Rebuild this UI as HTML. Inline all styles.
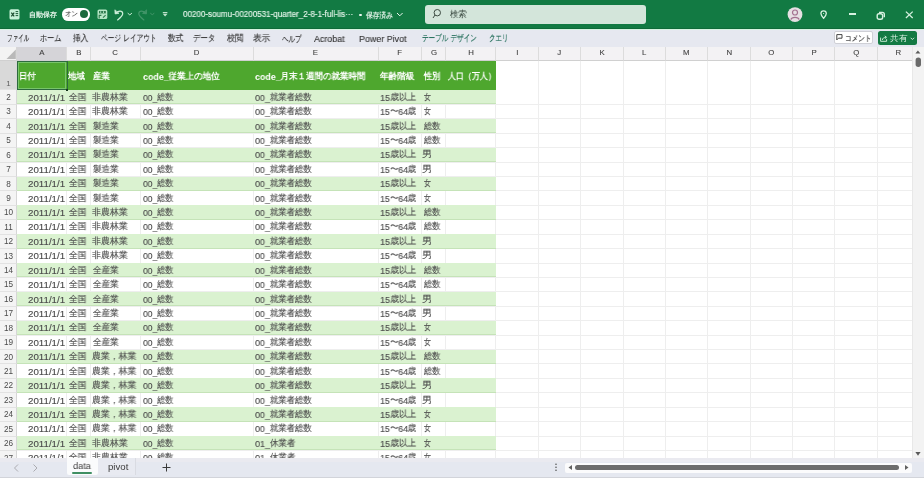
<!DOCTYPE html><html><head><meta charset="utf-8"><style>
*{margin:0;padding:0;box-sizing:border-box}
html,body{width:924px;height:478px;overflow:hidden;background:#fff;font-family:"Liberation Sans",sans-serif;color:#262626}
.a{position:absolute;white-space:nowrap}
.g{will-change:transform}
svg.a{overflow:visible}
.t{position:absolute;white-space:nowrap;transform-origin:0 0;line-height:normal;will-change:transform}
.ch{position:absolute;top:47.2px;height:13.8px;border-right:1px solid #dcdcdc;border-bottom:1px solid #d0d0d0}
.rh{position:absolute;left:0;width:17px;background:#f4f4f4;border-bottom:1px solid #e2e2e2;border-right:1px solid #d6d6d6}
.j{font-size:var(--j,1em);position:relative;top:var(--jt,0)}</style></head><body>
<div class="a" style="left:0;top:0;width:924px;height:28.8px;background:#127a43"></div>
<div class="a" style="left:0;top:27.6px;width:924px;height:1.2px;background:#0f6a39"></div>
<div class="a" style="left:0;top:28.8px;width:924px;height:1.6px;background:#d6f4e2"></div>
<svg class="a" style="left:9px;top:9px" width="11" height="11" viewBox="0 0 11 11"><rect x="0.5" y="0.3" width="10" height="10.2" rx="1.6" fill="#c9f1d9"/><path d="M2.3 3.6 L5.2 7.4 M5.2 3.6 L2.3 7.4" stroke="#1d4d30" stroke-width="1.2"/><path d="M6.6 2.6 H9.2 M6.6 4.6 H9.2 M6.6 6.6 H9.2" stroke="#1d5c38" stroke-width="1"/></svg>
<div class="t" style="left:28.80px;top:10.15px;transform:scaleX(1.000);font-size:7.4px;font-weight:bold;color:#e3f3e8">自動保存</div>
<div class="a" style="left:62.2px;top:8.1px;width:27.6px;height:12.5px;border-radius:6.3px;background:#fff"></div>
<div class="t" style="left:65.08px;top:9.40px;transform:scaleX(0.917);font-size:7px;color:#2a2a2a">オン</div>
<div class="a" style="left:80px;top:10.2px;width:8.3px;height:8.3px;border-radius:50%;background:#1b6a3d"></div>
<svg class="a" style="left:97px;top:9px" width="11" height="11" viewBox="0 0 11 11"><rect x="0.5" y="0.5" width="9.8" height="9.6" rx="1.6" fill="#b6e6c6"/><rect x="2" y="2" width="6.8" height="2.4" fill="#2d7a4c"/><rect x="3.2" y="2.4" width="1" height="1.4" fill="#c8f0d6"/><rect x="6" y="2.4" width="1" height="1.4" fill="#c8f0d6"/><path d="M2.2 9.6 V6.4 H4.4 M6 8.6 L8.6 6.2" stroke="#2d7a4c" stroke-width="1.1" fill="none"/></svg>
<svg class="a" style="left:113px;top:8px" width="20" height="13" viewBox="0 0 20 13" fill="none" stroke="#cdeed9" stroke-width="1.25" stroke-linecap="round" stroke-linejoin="round"><polygon points="1.9,2.2 2.1,5.9 5.6,5.4" fill="#cdeed9" stroke-width="0.8"/><path d="M3.2 4.8 C5 2.6 9.6 2.1 9.7 5.5 C9.8 7.6 7.2 9.9 4.6 11.9"/><path d="M15 5.4 L16.8 6.9 L18.6 5.4" stroke-width="1"/></svg>
<svg class="a" style="left:137px;top:8px" width="20" height="13" viewBox="0 0 20 13" fill="none" stroke="#429569" stroke-width="1.25" stroke-linecap="round" stroke-linejoin="round"><polygon points="9.6,2.2 9.4,5.9 5.9,5.4" fill="#429569" stroke-width="0.8"/><path d="M8.3 4.8 C6.5 2.6 1.9 2.1 1.8 5.5 C1.7 7.6 4.3 9.9 6.9 11.9"/><path d="M13.6 5.4 L15.3 6.7 L17 5.4" stroke-width="1"/></svg>
<svg class="a" style="left:162px;top:11px" width="7" height="8" viewBox="0 0 7 8" fill="#bfe3cc"><rect x="0.8" y="1" width="4.6" height="1.1"/><polygon points="0.7,2.8 5.5,2.8 3.1,5.6"/></svg>
<div class="t" style="left:182.80px;top:9.30px;transform:scaleX(0.960);font-size:8.4px;-webkit-text-stroke:0.15px currentColor;color:#e6f5eb">00200-soumu-00200531-quarter_2-8-1-full-lis···</div>
<div class="a" style="left:359.4px;top:13.5px;width:2.6px;height:2.6px;border-radius:50%;background:#eef7f1"></div>
<div class="t" style="left:366.00px;top:10.65px;transform:scaleX(0.838);font-size:7.6px;font-weight:bold;color:#e6f5eb">保存済み</div>
<svg class="a" style="left:396px;top:12px" width="8" height="6" viewBox="0 0 8 6" fill="none" stroke="#eef7f1" stroke-width="1"><path d="M1 1 L3.8 3.8 L6.6 1"/></svg>
<div class="a" style="left:424.6px;top:4.9px;width:221px;height:18.9px;border-radius:3px;background:#d3e5da"></div>
<svg class="a" style="left:431px;top:8px" width="12" height="12" viewBox="0 0 12 12" fill="none" stroke="#3c4a41" stroke-width="1"><circle cx="6.3" cy="4.7" r="3.2"/><path d="M4 7 L2 10"/></svg>
<div class="t" style="left:449.50px;top:9.00px;transform:scaleX(0.922);font-size:8.6px;color:#3b4a41">検索</div>
<svg class="a" style="left:787px;top:7px" width="16" height="16" viewBox="0 0 16 16"><circle cx="8" cy="7.6" r="7.4" fill="#e6e0e3"/><circle cx="8" cy="5.5" r="2.5" fill="none" stroke="#a3708f" stroke-width="1.2"/><path d="M3.9 12.6 C4.6 9.6 11.4 9.6 12.1 12.6" fill="none" stroke="#a3708f" stroke-width="1.2"/></svg>
<svg class="a" style="left:819.5px;top:10px" width="8" height="9" viewBox="0 0 8 9" fill="none" stroke="#d6f1e0" stroke-width="1.3"><path d="M3.6 8.3 C1.9 6.3 0.9 5 0.9 3.5 A2.7 2.7 0 0 1 6.3 3.5 C6.3 5 5.3 6.3 3.6 8.3 Z"/><circle cx="3.6" cy="3.5" r="0.6" fill="#d6f1e0" stroke="none"/></svg>
<div class="a" style="left:848.5px;top:13.4px;width:7px;height:1.6px;background:#d6f1e0"></div>
<svg class="a" style="left:876px;top:10.5px" width="10" height="9" viewBox="0 0 10 9" fill="none" stroke="#d6f1e0" stroke-width="1.4"><rect x="1.2" y="2.8" width="5.4" height="5.4" rx="1.8"/><path d="M3 1.4 H6.4 A1.9 1.9 0 0 1 8.3 3.3 V6.3"/></svg>
<svg class="a" style="left:905px;top:11.4px" width="9" height="8" viewBox="0 0 9 8" fill="none" stroke="#d6f1e0" stroke-width="1.3"><path d="M0.9 0.6 L7.7 7 M7.7 0.6 L0.9 7"/></svg>
<div class="a" style="left:0;top:30.4px;width:924px;height:16.8px;background:#e6e8f0"></div>
<div class="t" style="left:6.98px;top:32.00px;transform:scaleX(0.617);font-size:9.4px;--j:0.95em;-webkit-text-stroke:0.12px currentColor;color:#333"><span class="j">ファイル</span></div>
<div class="t" style="left:40.00px;top:31.50px;transform:scaleX(0.792);font-size:9.4px;--j:0.95em;-webkit-text-stroke:0.12px currentColor;color:#333"><span class="j">ホーム</span></div>
<div class="t" style="left:72.50px;top:32.00px;transform:scaleX(0.844);font-size:9.4px;--j:0.95em;-webkit-text-stroke:0.12px currentColor;color:#333"><span class="j">挿入</span></div>
<div class="t" style="left:100.60px;top:32.00px;transform:scaleX(0.742);font-size:9.4px;--j:0.95em;-webkit-text-stroke:0.12px currentColor;color:#333"><span class="j">ページ</span> <span class="j">レイアウト</span></div>
<div class="t" style="left:167.70px;top:32.00px;transform:scaleX(0.850);font-size:9.4px;--j:0.95em;-webkit-text-stroke:0.12px currentColor;color:#333"><span class="j">数式</span></div>
<div class="t" style="left:193.18px;top:32.00px;transform:scaleX(0.824);font-size:9.4px;--j:0.95em;-webkit-text-stroke:0.12px currentColor;color:#333"><span class="j">データ</span></div>
<div class="t" style="left:226.50px;top:32.00px;transform:scaleX(0.906);font-size:9.4px;--j:0.95em;-webkit-text-stroke:0.12px currentColor;color:#333"><span class="j">校閲</span></div>
<div class="t" style="left:252.65px;top:32.00px;transform:scaleX(0.953);font-size:9.4px;--j:0.95em;-webkit-text-stroke:0.12px currentColor;color:#333"><span class="j">表示</span></div>
<div class="t" style="left:281.70px;top:32.50px;transform:scaleX(0.722);font-size:9.4px;--j:0.95em;-webkit-text-stroke:0.12px currentColor;color:#333"><span class="j">ヘルプ</span></div>
<div class="t" style="left:314.20px;top:32.50px;transform:scaleX(0.947);font-size:9.4px;--j:0.95em;-webkit-text-stroke:0.12px currentColor;color:#333">Acrobat</div>
<div class="t" style="left:359.05px;top:32.50px;transform:scaleX(0.949);font-size:9.4px;--j:0.95em;-webkit-text-stroke:0.12px currentColor;color:#333">Power Pivot</div>
<div class="t" style="left:421.70px;top:32.00px;transform:scaleX(0.731);font-size:9.4px;--j:0.95em;-webkit-text-stroke:0.12px currentColor;color:#1d6a55"><span class="j">テーブル</span> <span class="j">デザイン</span></div>
<div class="t" style="left:489.18px;top:32.00px;transform:scaleX(0.721);font-size:9.4px;--j:0.95em;-webkit-text-stroke:0.12px currentColor;color:#1d6a55"><span class="j">クエリ</span></div>
<div class="a" style="left:833.9px;top:30.9px;width:38.9px;height:13.4px;border-radius:2px;background:#fff;border:1px solid #cfd0d6"></div>
<svg class="a" style="left:836px;top:34.4px" width="7" height="7" viewBox="0 0 7 7" fill="none" stroke="#3a3a3a" stroke-width="0.95" stroke-linejoin="round"><path d="M0.8 0.6 H6 V4.2 H2.4 L0.8 5.9 Z"/></svg>
<div class="t" style="left:845.17px;top:32.95px;transform:scaleX(0.828);font-size:8.2px;-webkit-text-stroke:0.15px currentColor;color:#333">コメント</div>
<div class="a" style="left:878.2px;top:30.9px;width:38.5px;height:13.7px;border-radius:2.5px;background:#137a43"></div>
<svg class="a" style="left:880.4px;top:35px" width="8" height="7" viewBox="0 0 8 7" fill="none" stroke="#cdeed9" stroke-width="0.95" stroke-linejoin="round"><path d="M0.6 2.6 V6.3 H6.6 V4.2"/><path d="M2.4 5 C2.6 3.2 3.8 2.3 5.8 2.3"/><path d="M4.8 0.9 L6.5 2.3 L4.8 3.7"/></svg>
<div class="t" style="left:889.82px;top:32.70px;transform:scaleX(1.079);font-size:8.2px;color:#dff3e6">共有</div>
<svg class="a" style="left:910.4px;top:37px" width="5" height="4" viewBox="0 0 5 4" fill="none" stroke="#dff3e6" stroke-width="0.9"><path d="M0.7 0.8 L2.4 2.5 L4.1 0.8"/></svg>
<div class="a" style="left:66.0px;top:60px;width:1px;height:398.6px;background:#eeeeee"></div>
<div class="a" style="left:89.9px;top:60px;width:1px;height:398.6px;background:#eeeeee"></div>
<div class="a" style="left:139.8px;top:60px;width:1px;height:398.6px;background:#eeeeee"></div>
<div class="a" style="left:252.9px;top:60px;width:1px;height:398.6px;background:#eeeeee"></div>
<div class="a" style="left:377.7px;top:60px;width:1px;height:398.6px;background:#eeeeee"></div>
<div class="a" style="left:421.1px;top:60px;width:1px;height:398.6px;background:#eeeeee"></div>
<div class="a" style="left:445.0px;top:60px;width:1px;height:398.6px;background:#eeeeee"></div>
<div class="a" style="left:495.0px;top:60px;width:1px;height:398.6px;background:#eeeeee"></div>
<div class="a" style="left:537.8px;top:60px;width:1px;height:398.6px;background:#eeeeee"></div>
<div class="a" style="left:580.2px;top:60px;width:1px;height:398.6px;background:#eeeeee"></div>
<div class="a" style="left:622.5px;top:60px;width:1px;height:398.6px;background:#eeeeee"></div>
<div class="a" style="left:664.9px;top:60px;width:1px;height:398.6px;background:#eeeeee"></div>
<div class="a" style="left:707.3px;top:60px;width:1px;height:398.6px;background:#eeeeee"></div>
<div class="a" style="left:749.7px;top:60px;width:1px;height:398.6px;background:#eeeeee"></div>
<div class="a" style="left:792.0px;top:60px;width:1px;height:398.6px;background:#eeeeee"></div>
<div class="a" style="left:834.4px;top:60px;width:1px;height:398.6px;background:#eeeeee"></div>
<div class="a" style="left:876.8px;top:60px;width:1px;height:398.6px;background:#eeeeee"></div>
<div class="a" style="left:919.2px;top:60px;width:1px;height:398.6px;background:#eeeeee"></div>
<div class="a" style="left:17px;top:103.92px;width:895.0px;height:1px;background:#eeeeee"></div>
<div class="a" style="left:17px;top:118.34px;width:895.0px;height:1px;background:#eeeeee"></div>
<div class="a" style="left:17px;top:132.76px;width:895.0px;height:1px;background:#eeeeee"></div>
<div class="a" style="left:17px;top:147.18px;width:895.0px;height:1px;background:#eeeeee"></div>
<div class="a" style="left:17px;top:161.60px;width:895.0px;height:1px;background:#eeeeee"></div>
<div class="a" style="left:17px;top:176.02px;width:895.0px;height:1px;background:#eeeeee"></div>
<div class="a" style="left:17px;top:190.44px;width:895.0px;height:1px;background:#eeeeee"></div>
<div class="a" style="left:17px;top:204.86px;width:895.0px;height:1px;background:#eeeeee"></div>
<div class="a" style="left:17px;top:219.28px;width:895.0px;height:1px;background:#eeeeee"></div>
<div class="a" style="left:17px;top:233.70px;width:895.0px;height:1px;background:#eeeeee"></div>
<div class="a" style="left:17px;top:248.12px;width:895.0px;height:1px;background:#eeeeee"></div>
<div class="a" style="left:17px;top:262.54px;width:895.0px;height:1px;background:#eeeeee"></div>
<div class="a" style="left:17px;top:276.96px;width:895.0px;height:1px;background:#eeeeee"></div>
<div class="a" style="left:17px;top:291.38px;width:895.0px;height:1px;background:#eeeeee"></div>
<div class="a" style="left:17px;top:305.80px;width:895.0px;height:1px;background:#eeeeee"></div>
<div class="a" style="left:17px;top:320.22px;width:895.0px;height:1px;background:#eeeeee"></div>
<div class="a" style="left:17px;top:334.64px;width:895.0px;height:1px;background:#eeeeee"></div>
<div class="a" style="left:17px;top:349.06px;width:895.0px;height:1px;background:#eeeeee"></div>
<div class="a" style="left:17px;top:363.48px;width:895.0px;height:1px;background:#eeeeee"></div>
<div class="a" style="left:17px;top:377.90px;width:895.0px;height:1px;background:#eeeeee"></div>
<div class="a" style="left:17px;top:392.32px;width:895.0px;height:1px;background:#eeeeee"></div>
<div class="a" style="left:17px;top:406.74px;width:895.0px;height:1px;background:#eeeeee"></div>
<div class="a" style="left:17px;top:421.16px;width:895.0px;height:1px;background:#eeeeee"></div>
<div class="a" style="left:17px;top:435.58px;width:895.0px;height:1px;background:#eeeeee"></div>
<div class="a" style="left:17px;top:450.00px;width:895.0px;height:1px;background:#eeeeee"></div>
<div class="a" style="left:17px;top:464.42px;width:895.0px;height:1px;background:#eeeeee"></div>
<div class="a" style="left:17px;top:90.00px;width:478.5px;height:14.42px;background:#daf2d0;border-bottom:1px solid #c5e3b8"></div>
<div class="a" style="left:17px;top:118.84px;width:478.5px;height:14.42px;background:#daf2d0;border-bottom:1px solid #c5e3b8"></div>
<div class="a" style="left:17px;top:147.68px;width:478.5px;height:14.42px;background:#daf2d0;border-bottom:1px solid #c5e3b8"></div>
<div class="a" style="left:17px;top:176.52px;width:478.5px;height:14.42px;background:#daf2d0;border-bottom:1px solid #c5e3b8"></div>
<div class="a" style="left:17px;top:205.36px;width:478.5px;height:14.42px;background:#daf2d0;border-bottom:1px solid #c5e3b8"></div>
<div class="a" style="left:17px;top:234.20px;width:478.5px;height:14.42px;background:#daf2d0;border-bottom:1px solid #c5e3b8"></div>
<div class="a" style="left:17px;top:263.04px;width:478.5px;height:14.42px;background:#daf2d0;border-bottom:1px solid #c5e3b8"></div>
<div class="a" style="left:17px;top:291.88px;width:478.5px;height:14.42px;background:#daf2d0;border-bottom:1px solid #c5e3b8"></div>
<div class="a" style="left:17px;top:320.72px;width:478.5px;height:14.42px;background:#daf2d0;border-bottom:1px solid #c5e3b8"></div>
<div class="a" style="left:17px;top:349.56px;width:478.5px;height:14.42px;background:#daf2d0;border-bottom:1px solid #c5e3b8"></div>
<div class="a" style="left:17px;top:378.40px;width:478.5px;height:14.42px;background:#daf2d0;border-bottom:1px solid #c5e3b8"></div>
<div class="a" style="left:17px;top:407.24px;width:478.5px;height:14.42px;background:#daf2d0;border-bottom:1px solid #c5e3b8"></div>
<div class="a" style="left:17px;top:436.08px;width:478.5px;height:14.42px;background:#daf2d0;border-bottom:1px solid #c5e3b8"></div>
<div class="a" style="left:17px;top:61px;width:478.5px;height:29px;background:#4ea72e"></div>
<div class="t" style="left:19.48px;top:71.30px;transform:scaleX(0.918);font-size:9.4px;font-weight:bold;--j:0.95em;--jt:-0.1em;color:#fff"><span class="j">日付</span></div>
<div class="t" style="left:68.40px;top:71.30px;transform:scaleX(0.939);font-size:9.4px;font-weight:bold;--j:0.95em;--jt:-0.1em;color:#fff"><span class="j">地域</span></div>
<div class="t" style="left:92.50px;top:71.30px;transform:scaleX(0.939);font-size:9.4px;font-weight:bold;--j:0.95em;--jt:-0.1em;color:#fff"><span class="j">産業</span></div>
<div class="t" style="left:142.70px;top:71.30px;transform:scaleX(0.947);font-size:9.4px;font-weight:bold;--j:0.95em;--jt:-0.1em;color:#fff">code_<span class="j">従業上の地位</span></div>
<div class="t" style="left:255.20px;top:71.30px;transform:scaleX(0.944);font-size:9.4px;font-weight:bold;--j:0.95em;--jt:-0.1em;color:#fff">code_<span class="j">月末１週間の就業時間</span></div>
<div class="t" style="left:379.70px;top:71.30px;transform:scaleX(0.958);font-size:9.4px;font-weight:bold;--j:0.95em;--jt:-0.1em;color:#fff"><span class="j">年齢階級</span></div>
<div class="t" style="left:423.70px;top:71.30px;transform:scaleX(0.906);font-size:9.4px;font-weight:bold;--j:0.95em;--jt:-0.1em;color:#fff"><span class="j">性別</span></div>
<div class="t" style="left:448.00px;top:71.30px;transform:scaleX(0.886);font-size:9.4px;font-weight:bold;--j:0.95em;--jt:-0.1em;color:#fff"><span class="j">人口（万人）</span></div>
<div class="t" style="left:27.50px;top:91.70px;transform:scaleX(1.014);font-size:9.6px;--j:0.9em;--jt:-0.1em;-webkit-text-stroke:0.12px #4a4a4a;color:#4a4a4a">2011/1/1</div>
<div class="t" style="left:68.60px;top:91.70px;transform:scaleX(0.965);font-size:9.6px;--j:0.9em;--jt:-0.1em;-webkit-text-stroke:0.12px #4a4a4a;color:#4a4a4a"><span class="j">全国</span></div>
<div class="t" style="left:91.91px;top:91.70px;transform:scaleX(0.994);font-size:9.6px;--j:0.9em;--jt:-0.1em;-webkit-text-stroke:0.12px #4a4a4a;color:#4a4a4a"><span class="j">非農林業</span></div>
<div class="t" style="left:142.70px;top:91.70px;transform:scaleX(0.891);font-size:9.6px;--j:0.9em;--jt:-0.1em;-webkit-text-stroke:0.12px #4a4a4a;color:#4a4a4a">00_<span class="j">総数</span></div>
<div class="t" style="left:255.20px;top:91.70px;transform:scaleX(0.930);font-size:9.6px;--j:0.9em;--jt:-0.1em;-webkit-text-stroke:0.12px #4a4a4a;color:#4a4a4a">00_<span class="j">就業者総数</span></div>
<div class="t" style="left:379.65px;top:91.70px;transform:scaleX(0.950);font-size:9.6px;--j:0.9em;--jt:-0.1em;-webkit-text-stroke:0.12px #4a4a4a;color:#4a4a4a">15<span class="j">歳以上</span></div>
<div class="t" style="left:423.60px;top:91.70px;transform:scaleX(0.767);font-size:9.6px;--j:0.9em;--jt:-0.1em;-webkit-text-stroke:0.12px #4a4a4a;color:#4a4a4a"><span class="j">女</span></div>
<div class="t" style="left:27.50px;top:106.12px;transform:scaleX(1.014);font-size:9.6px;--j:0.9em;--jt:-0.1em;-webkit-text-stroke:0.12px #4a4a4a;color:#4a4a4a">2011/1/1</div>
<div class="t" style="left:68.60px;top:106.12px;transform:scaleX(0.965);font-size:9.6px;--j:0.9em;--jt:-0.1em;-webkit-text-stroke:0.12px #4a4a4a;color:#4a4a4a"><span class="j">全国</span></div>
<div class="t" style="left:91.91px;top:106.12px;transform:scaleX(0.994);font-size:9.6px;--j:0.9em;--jt:-0.1em;-webkit-text-stroke:0.12px #4a4a4a;color:#4a4a4a"><span class="j">非農林業</span></div>
<div class="t" style="left:142.70px;top:106.12px;transform:scaleX(0.891);font-size:9.6px;--j:0.9em;--jt:-0.1em;-webkit-text-stroke:0.12px #4a4a4a;color:#4a4a4a">00_<span class="j">総数</span></div>
<div class="t" style="left:255.20px;top:106.12px;transform:scaleX(0.930);font-size:9.6px;--j:0.9em;--jt:-0.1em;-webkit-text-stroke:0.12px #4a4a4a;color:#4a4a4a">00_<span class="j">就業者総数</span></div>
<div class="t" style="left:379.68px;top:106.12px;transform:scaleX(0.924);font-size:9.6px;--j:0.9em;--jt:-0.1em;-webkit-text-stroke:0.12px #4a4a4a;color:#4a4a4a">15<span class="j">〜</span>64<span class="j">歳</span></div>
<div class="t" style="left:423.60px;top:106.12px;transform:scaleX(0.767);font-size:9.6px;--j:0.9em;--jt:-0.1em;-webkit-text-stroke:0.12px #4a4a4a;color:#4a4a4a"><span class="j">女</span></div>
<div class="t" style="left:27.50px;top:120.54px;transform:scaleX(1.014);font-size:9.6px;--j:0.9em;--jt:-0.1em;-webkit-text-stroke:0.12px #4a4a4a;color:#4a4a4a">2011/1/1</div>
<div class="t" style="left:68.60px;top:120.54px;transform:scaleX(0.965);font-size:9.6px;--j:0.9em;--jt:-0.1em;-webkit-text-stroke:0.12px #4a4a4a;color:#4a4a4a"><span class="j">全国</span></div>
<div class="t" style="left:92.90px;top:120.54px;transform:scaleX(0.950);font-size:9.6px;--j:0.9em;--jt:-0.1em;-webkit-text-stroke:0.12px #4a4a4a;color:#4a4a4a"><span class="j">製造業</span></div>
<div class="t" style="left:142.70px;top:120.54px;transform:scaleX(0.891);font-size:9.6px;--j:0.9em;--jt:-0.1em;-webkit-text-stroke:0.12px #4a4a4a;color:#4a4a4a">00_<span class="j">総数</span></div>
<div class="t" style="left:255.20px;top:120.54px;transform:scaleX(0.930);font-size:9.6px;--j:0.9em;--jt:-0.1em;-webkit-text-stroke:0.12px #4a4a4a;color:#4a4a4a">00_<span class="j">就業者総数</span></div>
<div class="t" style="left:379.65px;top:120.54px;transform:scaleX(0.950);font-size:9.6px;--j:0.9em;--jt:-0.1em;-webkit-text-stroke:0.12px #4a4a4a;color:#4a4a4a">15<span class="j">歳以上</span></div>
<div class="t" style="left:423.60px;top:120.54px;transform:scaleX(0.911);font-size:9.6px;--j:0.9em;--jt:-0.1em;-webkit-text-stroke:0.12px #4a4a4a;color:#4a4a4a"><span class="j">総数</span></div>
<div class="t" style="left:27.50px;top:134.96px;transform:scaleX(1.014);font-size:9.6px;--j:0.9em;--jt:-0.1em;-webkit-text-stroke:0.12px #4a4a4a;color:#4a4a4a">2011/1/1</div>
<div class="t" style="left:68.60px;top:134.96px;transform:scaleX(0.965);font-size:9.6px;--j:0.9em;--jt:-0.1em;-webkit-text-stroke:0.12px #4a4a4a;color:#4a4a4a"><span class="j">全国</span></div>
<div class="t" style="left:92.90px;top:134.96px;transform:scaleX(0.950);font-size:9.6px;--j:0.9em;--jt:-0.1em;-webkit-text-stroke:0.12px #4a4a4a;color:#4a4a4a"><span class="j">製造業</span></div>
<div class="t" style="left:142.70px;top:134.96px;transform:scaleX(0.891);font-size:9.6px;--j:0.9em;--jt:-0.1em;-webkit-text-stroke:0.12px #4a4a4a;color:#4a4a4a">00_<span class="j">総数</span></div>
<div class="t" style="left:255.20px;top:134.96px;transform:scaleX(0.930);font-size:9.6px;--j:0.9em;--jt:-0.1em;-webkit-text-stroke:0.12px #4a4a4a;color:#4a4a4a">00_<span class="j">就業者総数</span></div>
<div class="t" style="left:379.68px;top:134.96px;transform:scaleX(0.924);font-size:9.6px;--j:0.9em;--jt:-0.1em;-webkit-text-stroke:0.12px #4a4a4a;color:#4a4a4a">15<span class="j">〜</span>64<span class="j">歳</span></div>
<div class="t" style="left:423.60px;top:134.96px;transform:scaleX(0.911);font-size:9.6px;--j:0.9em;--jt:-0.1em;-webkit-text-stroke:0.12px #4a4a4a;color:#4a4a4a"><span class="j">総数</span></div>
<div class="t" style="left:27.50px;top:149.38px;transform:scaleX(1.014);font-size:9.6px;--j:0.9em;--jt:-0.1em;-webkit-text-stroke:0.12px #4a4a4a;color:#4a4a4a">2011/1/1</div>
<div class="t" style="left:68.60px;top:149.38px;transform:scaleX(0.965);font-size:9.6px;--j:0.9em;--jt:-0.1em;-webkit-text-stroke:0.12px #4a4a4a;color:#4a4a4a"><span class="j">全国</span></div>
<div class="t" style="left:92.90px;top:149.38px;transform:scaleX(0.950);font-size:9.6px;--j:0.9em;--jt:-0.1em;-webkit-text-stroke:0.12px #4a4a4a;color:#4a4a4a"><span class="j">製造業</span></div>
<div class="t" style="left:142.70px;top:149.38px;transform:scaleX(0.891);font-size:9.6px;--j:0.9em;--jt:-0.1em;-webkit-text-stroke:0.12px #4a4a4a;color:#4a4a4a">00_<span class="j">総数</span></div>
<div class="t" style="left:255.20px;top:149.38px;transform:scaleX(0.930);font-size:9.6px;--j:0.9em;--jt:-0.1em;-webkit-text-stroke:0.12px #4a4a4a;color:#4a4a4a">00_<span class="j">就業者総数</span></div>
<div class="t" style="left:379.65px;top:149.38px;transform:scaleX(0.950);font-size:9.6px;--j:0.9em;--jt:-0.1em;-webkit-text-stroke:0.12px #4a4a4a;color:#4a4a4a">15<span class="j">歳以上</span></div>
<div class="t" style="left:422.47px;top:149.38px;transform:scaleX(1.129);font-size:9.6px;--j:0.9em;--jt:-0.1em;-webkit-text-stroke:0.12px #4a4a4a;color:#4a4a4a"><span class="j">男</span></div>
<div class="t" style="left:27.50px;top:163.80px;transform:scaleX(1.014);font-size:9.6px;--j:0.9em;--jt:-0.1em;-webkit-text-stroke:0.12px #4a4a4a;color:#4a4a4a">2011/1/1</div>
<div class="t" style="left:68.60px;top:163.80px;transform:scaleX(0.965);font-size:9.6px;--j:0.9em;--jt:-0.1em;-webkit-text-stroke:0.12px #4a4a4a;color:#4a4a4a"><span class="j">全国</span></div>
<div class="t" style="left:92.90px;top:163.80px;transform:scaleX(0.950);font-size:9.6px;--j:0.9em;--jt:-0.1em;-webkit-text-stroke:0.12px #4a4a4a;color:#4a4a4a"><span class="j">製造業</span></div>
<div class="t" style="left:142.70px;top:163.80px;transform:scaleX(0.891);font-size:9.6px;--j:0.9em;--jt:-0.1em;-webkit-text-stroke:0.12px #4a4a4a;color:#4a4a4a">00_<span class="j">総数</span></div>
<div class="t" style="left:255.20px;top:163.80px;transform:scaleX(0.930);font-size:9.6px;--j:0.9em;--jt:-0.1em;-webkit-text-stroke:0.12px #4a4a4a;color:#4a4a4a">00_<span class="j">就業者総数</span></div>
<div class="t" style="left:379.68px;top:163.80px;transform:scaleX(0.924);font-size:9.6px;--j:0.9em;--jt:-0.1em;-webkit-text-stroke:0.12px #4a4a4a;color:#4a4a4a">15<span class="j">〜</span>64<span class="j">歳</span></div>
<div class="t" style="left:422.47px;top:163.80px;transform:scaleX(1.129);font-size:9.6px;--j:0.9em;--jt:-0.1em;-webkit-text-stroke:0.12px #4a4a4a;color:#4a4a4a"><span class="j">男</span></div>
<div class="t" style="left:27.50px;top:178.22px;transform:scaleX(1.014);font-size:9.6px;--j:0.9em;--jt:-0.1em;-webkit-text-stroke:0.12px #4a4a4a;color:#4a4a4a">2011/1/1</div>
<div class="t" style="left:68.60px;top:178.22px;transform:scaleX(0.965);font-size:9.6px;--j:0.9em;--jt:-0.1em;-webkit-text-stroke:0.12px #4a4a4a;color:#4a4a4a"><span class="j">全国</span></div>
<div class="t" style="left:92.90px;top:178.22px;transform:scaleX(0.950);font-size:9.6px;--j:0.9em;--jt:-0.1em;-webkit-text-stroke:0.12px #4a4a4a;color:#4a4a4a"><span class="j">製造業</span></div>
<div class="t" style="left:142.70px;top:178.22px;transform:scaleX(0.891);font-size:9.6px;--j:0.9em;--jt:-0.1em;-webkit-text-stroke:0.12px #4a4a4a;color:#4a4a4a">00_<span class="j">総数</span></div>
<div class="t" style="left:255.20px;top:178.22px;transform:scaleX(0.930);font-size:9.6px;--j:0.9em;--jt:-0.1em;-webkit-text-stroke:0.12px #4a4a4a;color:#4a4a4a">00_<span class="j">就業者総数</span></div>
<div class="t" style="left:379.65px;top:178.22px;transform:scaleX(0.950);font-size:9.6px;--j:0.9em;--jt:-0.1em;-webkit-text-stroke:0.12px #4a4a4a;color:#4a4a4a">15<span class="j">歳以上</span></div>
<div class="t" style="left:423.60px;top:178.22px;transform:scaleX(0.767);font-size:9.6px;--j:0.9em;--jt:-0.1em;-webkit-text-stroke:0.12px #4a4a4a;color:#4a4a4a"><span class="j">女</span></div>
<div class="t" style="left:27.50px;top:192.64px;transform:scaleX(1.014);font-size:9.6px;--j:0.9em;--jt:-0.1em;-webkit-text-stroke:0.12px #4a4a4a;color:#4a4a4a">2011/1/1</div>
<div class="t" style="left:68.60px;top:192.64px;transform:scaleX(0.965);font-size:9.6px;--j:0.9em;--jt:-0.1em;-webkit-text-stroke:0.12px #4a4a4a;color:#4a4a4a"><span class="j">全国</span></div>
<div class="t" style="left:92.90px;top:192.64px;transform:scaleX(0.950);font-size:9.6px;--j:0.9em;--jt:-0.1em;-webkit-text-stroke:0.12px #4a4a4a;color:#4a4a4a"><span class="j">製造業</span></div>
<div class="t" style="left:142.70px;top:192.64px;transform:scaleX(0.891);font-size:9.6px;--j:0.9em;--jt:-0.1em;-webkit-text-stroke:0.12px #4a4a4a;color:#4a4a4a">00_<span class="j">総数</span></div>
<div class="t" style="left:255.20px;top:192.64px;transform:scaleX(0.930);font-size:9.6px;--j:0.9em;--jt:-0.1em;-webkit-text-stroke:0.12px #4a4a4a;color:#4a4a4a">00_<span class="j">就業者総数</span></div>
<div class="t" style="left:379.68px;top:192.64px;transform:scaleX(0.924);font-size:9.6px;--j:0.9em;--jt:-0.1em;-webkit-text-stroke:0.12px #4a4a4a;color:#4a4a4a">15<span class="j">〜</span>64<span class="j">歳</span></div>
<div class="t" style="left:423.60px;top:192.64px;transform:scaleX(0.767);font-size:9.6px;--j:0.9em;--jt:-0.1em;-webkit-text-stroke:0.12px #4a4a4a;color:#4a4a4a"><span class="j">女</span></div>
<div class="t" style="left:27.50px;top:207.06px;transform:scaleX(1.014);font-size:9.6px;--j:0.9em;--jt:-0.1em;-webkit-text-stroke:0.12px #4a4a4a;color:#4a4a4a">2011/1/1</div>
<div class="t" style="left:68.60px;top:207.06px;transform:scaleX(0.965);font-size:9.6px;--j:0.9em;--jt:-0.1em;-webkit-text-stroke:0.12px #4a4a4a;color:#4a4a4a"><span class="j">全国</span></div>
<div class="t" style="left:91.91px;top:207.06px;transform:scaleX(0.994);font-size:9.6px;--j:0.9em;--jt:-0.1em;-webkit-text-stroke:0.12px #4a4a4a;color:#4a4a4a"><span class="j">非農林業</span></div>
<div class="t" style="left:142.70px;top:207.06px;transform:scaleX(0.891);font-size:9.6px;--j:0.9em;--jt:-0.1em;-webkit-text-stroke:0.12px #4a4a4a;color:#4a4a4a">00_<span class="j">総数</span></div>
<div class="t" style="left:255.20px;top:207.06px;transform:scaleX(0.930);font-size:9.6px;--j:0.9em;--jt:-0.1em;-webkit-text-stroke:0.12px #4a4a4a;color:#4a4a4a">00_<span class="j">就業者総数</span></div>
<div class="t" style="left:379.65px;top:207.06px;transform:scaleX(0.950);font-size:9.6px;--j:0.9em;--jt:-0.1em;-webkit-text-stroke:0.12px #4a4a4a;color:#4a4a4a">15<span class="j">歳以上</span></div>
<div class="t" style="left:423.60px;top:207.06px;transform:scaleX(0.911);font-size:9.6px;--j:0.9em;--jt:-0.1em;-webkit-text-stroke:0.12px #4a4a4a;color:#4a4a4a"><span class="j">総数</span></div>
<div class="t" style="left:27.50px;top:221.48px;transform:scaleX(1.014);font-size:9.6px;--j:0.9em;--jt:-0.1em;-webkit-text-stroke:0.12px #4a4a4a;color:#4a4a4a">2011/1/1</div>
<div class="t" style="left:68.60px;top:221.48px;transform:scaleX(0.965);font-size:9.6px;--j:0.9em;--jt:-0.1em;-webkit-text-stroke:0.12px #4a4a4a;color:#4a4a4a"><span class="j">全国</span></div>
<div class="t" style="left:91.91px;top:221.48px;transform:scaleX(0.994);font-size:9.6px;--j:0.9em;--jt:-0.1em;-webkit-text-stroke:0.12px #4a4a4a;color:#4a4a4a"><span class="j">非農林業</span></div>
<div class="t" style="left:142.70px;top:221.48px;transform:scaleX(0.891);font-size:9.6px;--j:0.9em;--jt:-0.1em;-webkit-text-stroke:0.12px #4a4a4a;color:#4a4a4a">00_<span class="j">総数</span></div>
<div class="t" style="left:255.20px;top:221.48px;transform:scaleX(0.930);font-size:9.6px;--j:0.9em;--jt:-0.1em;-webkit-text-stroke:0.12px #4a4a4a;color:#4a4a4a">00_<span class="j">就業者総数</span></div>
<div class="t" style="left:379.68px;top:221.48px;transform:scaleX(0.924);font-size:9.6px;--j:0.9em;--jt:-0.1em;-webkit-text-stroke:0.12px #4a4a4a;color:#4a4a4a">15<span class="j">〜</span>64<span class="j">歳</span></div>
<div class="t" style="left:423.60px;top:221.48px;transform:scaleX(0.911);font-size:9.6px;--j:0.9em;--jt:-0.1em;-webkit-text-stroke:0.12px #4a4a4a;color:#4a4a4a"><span class="j">総数</span></div>
<div class="t" style="left:27.50px;top:235.90px;transform:scaleX(1.014);font-size:9.6px;--j:0.9em;--jt:-0.1em;-webkit-text-stroke:0.12px #4a4a4a;color:#4a4a4a">2011/1/1</div>
<div class="t" style="left:68.60px;top:235.90px;transform:scaleX(0.965);font-size:9.6px;--j:0.9em;--jt:-0.1em;-webkit-text-stroke:0.12px #4a4a4a;color:#4a4a4a"><span class="j">全国</span></div>
<div class="t" style="left:91.91px;top:235.90px;transform:scaleX(0.994);font-size:9.6px;--j:0.9em;--jt:-0.1em;-webkit-text-stroke:0.12px #4a4a4a;color:#4a4a4a"><span class="j">非農林業</span></div>
<div class="t" style="left:142.70px;top:235.90px;transform:scaleX(0.891);font-size:9.6px;--j:0.9em;--jt:-0.1em;-webkit-text-stroke:0.12px #4a4a4a;color:#4a4a4a">00_<span class="j">総数</span></div>
<div class="t" style="left:255.20px;top:235.90px;transform:scaleX(0.930);font-size:9.6px;--j:0.9em;--jt:-0.1em;-webkit-text-stroke:0.12px #4a4a4a;color:#4a4a4a">00_<span class="j">就業者総数</span></div>
<div class="t" style="left:379.65px;top:235.90px;transform:scaleX(0.950);font-size:9.6px;--j:0.9em;--jt:-0.1em;-webkit-text-stroke:0.12px #4a4a4a;color:#4a4a4a">15<span class="j">歳以上</span></div>
<div class="t" style="left:422.47px;top:235.90px;transform:scaleX(1.129);font-size:9.6px;--j:0.9em;--jt:-0.1em;-webkit-text-stroke:0.12px #4a4a4a;color:#4a4a4a"><span class="j">男</span></div>
<div class="t" style="left:27.50px;top:250.32px;transform:scaleX(1.014);font-size:9.6px;--j:0.9em;--jt:-0.1em;-webkit-text-stroke:0.12px #4a4a4a;color:#4a4a4a">2011/1/1</div>
<div class="t" style="left:68.60px;top:250.32px;transform:scaleX(0.965);font-size:9.6px;--j:0.9em;--jt:-0.1em;-webkit-text-stroke:0.12px #4a4a4a;color:#4a4a4a"><span class="j">全国</span></div>
<div class="t" style="left:91.91px;top:250.32px;transform:scaleX(0.994);font-size:9.6px;--j:0.9em;--jt:-0.1em;-webkit-text-stroke:0.12px #4a4a4a;color:#4a4a4a"><span class="j">非農林業</span></div>
<div class="t" style="left:142.70px;top:250.32px;transform:scaleX(0.891);font-size:9.6px;--j:0.9em;--jt:-0.1em;-webkit-text-stroke:0.12px #4a4a4a;color:#4a4a4a">00_<span class="j">総数</span></div>
<div class="t" style="left:255.20px;top:250.32px;transform:scaleX(0.930);font-size:9.6px;--j:0.9em;--jt:-0.1em;-webkit-text-stroke:0.12px #4a4a4a;color:#4a4a4a">00_<span class="j">就業者総数</span></div>
<div class="t" style="left:379.68px;top:250.32px;transform:scaleX(0.924);font-size:9.6px;--j:0.9em;--jt:-0.1em;-webkit-text-stroke:0.12px #4a4a4a;color:#4a4a4a">15<span class="j">〜</span>64<span class="j">歳</span></div>
<div class="t" style="left:422.47px;top:250.32px;transform:scaleX(1.129);font-size:9.6px;--j:0.9em;--jt:-0.1em;-webkit-text-stroke:0.12px #4a4a4a;color:#4a4a4a"><span class="j">男</span></div>
<div class="t" style="left:27.50px;top:264.74px;transform:scaleX(1.014);font-size:9.6px;--j:0.9em;--jt:-0.1em;-webkit-text-stroke:0.12px #4a4a4a;color:#4a4a4a">2011/1/1</div>
<div class="t" style="left:68.60px;top:264.74px;transform:scaleX(0.965);font-size:9.6px;--j:0.9em;--jt:-0.1em;-webkit-text-stroke:0.12px #4a4a4a;color:#4a4a4a"><span class="j">全国</span></div>
<div class="t" style="left:92.90px;top:264.74px;transform:scaleX(0.950);font-size:9.6px;--j:0.9em;--jt:-0.1em;-webkit-text-stroke:0.12px #4a4a4a;color:#4a4a4a"><span class="j">全産業</span></div>
<div class="t" style="left:142.70px;top:264.74px;transform:scaleX(0.891);font-size:9.6px;--j:0.9em;--jt:-0.1em;-webkit-text-stroke:0.12px #4a4a4a;color:#4a4a4a">00_<span class="j">総数</span></div>
<div class="t" style="left:255.20px;top:264.74px;transform:scaleX(0.930);font-size:9.6px;--j:0.9em;--jt:-0.1em;-webkit-text-stroke:0.12px #4a4a4a;color:#4a4a4a">00_<span class="j">就業者総数</span></div>
<div class="t" style="left:379.65px;top:264.74px;transform:scaleX(0.950);font-size:9.6px;--j:0.9em;--jt:-0.1em;-webkit-text-stroke:0.12px #4a4a4a;color:#4a4a4a">15<span class="j">歳以上</span></div>
<div class="t" style="left:423.60px;top:264.74px;transform:scaleX(0.911);font-size:9.6px;--j:0.9em;--jt:-0.1em;-webkit-text-stroke:0.12px #4a4a4a;color:#4a4a4a"><span class="j">総数</span></div>
<div class="t" style="left:27.50px;top:279.16px;transform:scaleX(1.014);font-size:9.6px;--j:0.9em;--jt:-0.1em;-webkit-text-stroke:0.12px #4a4a4a;color:#4a4a4a">2011/1/1</div>
<div class="t" style="left:68.60px;top:279.16px;transform:scaleX(0.965);font-size:9.6px;--j:0.9em;--jt:-0.1em;-webkit-text-stroke:0.12px #4a4a4a;color:#4a4a4a"><span class="j">全国</span></div>
<div class="t" style="left:92.90px;top:279.16px;transform:scaleX(0.950);font-size:9.6px;--j:0.9em;--jt:-0.1em;-webkit-text-stroke:0.12px #4a4a4a;color:#4a4a4a"><span class="j">全産業</span></div>
<div class="t" style="left:142.70px;top:279.16px;transform:scaleX(0.891);font-size:9.6px;--j:0.9em;--jt:-0.1em;-webkit-text-stroke:0.12px #4a4a4a;color:#4a4a4a">00_<span class="j">総数</span></div>
<div class="t" style="left:255.20px;top:279.16px;transform:scaleX(0.930);font-size:9.6px;--j:0.9em;--jt:-0.1em;-webkit-text-stroke:0.12px #4a4a4a;color:#4a4a4a">00_<span class="j">就業者総数</span></div>
<div class="t" style="left:379.68px;top:279.16px;transform:scaleX(0.924);font-size:9.6px;--j:0.9em;--jt:-0.1em;-webkit-text-stroke:0.12px #4a4a4a;color:#4a4a4a">15<span class="j">〜</span>64<span class="j">歳</span></div>
<div class="t" style="left:423.60px;top:279.16px;transform:scaleX(0.911);font-size:9.6px;--j:0.9em;--jt:-0.1em;-webkit-text-stroke:0.12px #4a4a4a;color:#4a4a4a"><span class="j">総数</span></div>
<div class="t" style="left:27.50px;top:293.58px;transform:scaleX(1.014);font-size:9.6px;--j:0.9em;--jt:-0.1em;-webkit-text-stroke:0.12px #4a4a4a;color:#4a4a4a">2011/1/1</div>
<div class="t" style="left:68.60px;top:293.58px;transform:scaleX(0.965);font-size:9.6px;--j:0.9em;--jt:-0.1em;-webkit-text-stroke:0.12px #4a4a4a;color:#4a4a4a"><span class="j">全国</span></div>
<div class="t" style="left:92.90px;top:293.58px;transform:scaleX(0.950);font-size:9.6px;--j:0.9em;--jt:-0.1em;-webkit-text-stroke:0.12px #4a4a4a;color:#4a4a4a"><span class="j">全産業</span></div>
<div class="t" style="left:142.70px;top:293.58px;transform:scaleX(0.891);font-size:9.6px;--j:0.9em;--jt:-0.1em;-webkit-text-stroke:0.12px #4a4a4a;color:#4a4a4a">00_<span class="j">総数</span></div>
<div class="t" style="left:255.20px;top:293.58px;transform:scaleX(0.930);font-size:9.6px;--j:0.9em;--jt:-0.1em;-webkit-text-stroke:0.12px #4a4a4a;color:#4a4a4a">00_<span class="j">就業者総数</span></div>
<div class="t" style="left:379.65px;top:293.58px;transform:scaleX(0.950);font-size:9.6px;--j:0.9em;--jt:-0.1em;-webkit-text-stroke:0.12px #4a4a4a;color:#4a4a4a">15<span class="j">歳以上</span></div>
<div class="t" style="left:422.47px;top:293.58px;transform:scaleX(1.129);font-size:9.6px;--j:0.9em;--jt:-0.1em;-webkit-text-stroke:0.12px #4a4a4a;color:#4a4a4a"><span class="j">男</span></div>
<div class="t" style="left:27.50px;top:308.00px;transform:scaleX(1.014);font-size:9.6px;--j:0.9em;--jt:-0.1em;-webkit-text-stroke:0.12px #4a4a4a;color:#4a4a4a">2011/1/1</div>
<div class="t" style="left:68.60px;top:308.00px;transform:scaleX(0.965);font-size:9.6px;--j:0.9em;--jt:-0.1em;-webkit-text-stroke:0.12px #4a4a4a;color:#4a4a4a"><span class="j">全国</span></div>
<div class="t" style="left:92.90px;top:308.00px;transform:scaleX(0.950);font-size:9.6px;--j:0.9em;--jt:-0.1em;-webkit-text-stroke:0.12px #4a4a4a;color:#4a4a4a"><span class="j">全産業</span></div>
<div class="t" style="left:142.70px;top:308.00px;transform:scaleX(0.891);font-size:9.6px;--j:0.9em;--jt:-0.1em;-webkit-text-stroke:0.12px #4a4a4a;color:#4a4a4a">00_<span class="j">総数</span></div>
<div class="t" style="left:255.20px;top:308.00px;transform:scaleX(0.930);font-size:9.6px;--j:0.9em;--jt:-0.1em;-webkit-text-stroke:0.12px #4a4a4a;color:#4a4a4a">00_<span class="j">就業者総数</span></div>
<div class="t" style="left:379.68px;top:308.00px;transform:scaleX(0.924);font-size:9.6px;--j:0.9em;--jt:-0.1em;-webkit-text-stroke:0.12px #4a4a4a;color:#4a4a4a">15<span class="j">〜</span>64<span class="j">歳</span></div>
<div class="t" style="left:422.47px;top:308.00px;transform:scaleX(1.129);font-size:9.6px;--j:0.9em;--jt:-0.1em;-webkit-text-stroke:0.12px #4a4a4a;color:#4a4a4a"><span class="j">男</span></div>
<div class="t" style="left:27.50px;top:322.42px;transform:scaleX(1.014);font-size:9.6px;--j:0.9em;--jt:-0.1em;-webkit-text-stroke:0.12px #4a4a4a;color:#4a4a4a">2011/1/1</div>
<div class="t" style="left:68.60px;top:322.42px;transform:scaleX(0.965);font-size:9.6px;--j:0.9em;--jt:-0.1em;-webkit-text-stroke:0.12px #4a4a4a;color:#4a4a4a"><span class="j">全国</span></div>
<div class="t" style="left:92.90px;top:322.42px;transform:scaleX(0.950);font-size:9.6px;--j:0.9em;--jt:-0.1em;-webkit-text-stroke:0.12px #4a4a4a;color:#4a4a4a"><span class="j">全産業</span></div>
<div class="t" style="left:142.70px;top:322.42px;transform:scaleX(0.891);font-size:9.6px;--j:0.9em;--jt:-0.1em;-webkit-text-stroke:0.12px #4a4a4a;color:#4a4a4a">00_<span class="j">総数</span></div>
<div class="t" style="left:255.20px;top:322.42px;transform:scaleX(0.930);font-size:9.6px;--j:0.9em;--jt:-0.1em;-webkit-text-stroke:0.12px #4a4a4a;color:#4a4a4a">00_<span class="j">就業者総数</span></div>
<div class="t" style="left:379.65px;top:322.42px;transform:scaleX(0.950);font-size:9.6px;--j:0.9em;--jt:-0.1em;-webkit-text-stroke:0.12px #4a4a4a;color:#4a4a4a">15<span class="j">歳以上</span></div>
<div class="t" style="left:423.60px;top:322.42px;transform:scaleX(0.767);font-size:9.6px;--j:0.9em;--jt:-0.1em;-webkit-text-stroke:0.12px #4a4a4a;color:#4a4a4a"><span class="j">女</span></div>
<div class="t" style="left:27.50px;top:336.84px;transform:scaleX(1.014);font-size:9.6px;--j:0.9em;--jt:-0.1em;-webkit-text-stroke:0.12px #4a4a4a;color:#4a4a4a">2011/1/1</div>
<div class="t" style="left:68.60px;top:336.84px;transform:scaleX(0.965);font-size:9.6px;--j:0.9em;--jt:-0.1em;-webkit-text-stroke:0.12px #4a4a4a;color:#4a4a4a"><span class="j">全国</span></div>
<div class="t" style="left:92.90px;top:336.84px;transform:scaleX(0.950);font-size:9.6px;--j:0.9em;--jt:-0.1em;-webkit-text-stroke:0.12px #4a4a4a;color:#4a4a4a"><span class="j">全産業</span></div>
<div class="t" style="left:142.70px;top:336.84px;transform:scaleX(0.891);font-size:9.6px;--j:0.9em;--jt:-0.1em;-webkit-text-stroke:0.12px #4a4a4a;color:#4a4a4a">00_<span class="j">総数</span></div>
<div class="t" style="left:255.20px;top:336.84px;transform:scaleX(0.930);font-size:9.6px;--j:0.9em;--jt:-0.1em;-webkit-text-stroke:0.12px #4a4a4a;color:#4a4a4a">00_<span class="j">就業者総数</span></div>
<div class="t" style="left:379.68px;top:336.84px;transform:scaleX(0.924);font-size:9.6px;--j:0.9em;--jt:-0.1em;-webkit-text-stroke:0.12px #4a4a4a;color:#4a4a4a">15<span class="j">〜</span>64<span class="j">歳</span></div>
<div class="t" style="left:423.60px;top:336.84px;transform:scaleX(0.767);font-size:9.6px;--j:0.9em;--jt:-0.1em;-webkit-text-stroke:0.12px #4a4a4a;color:#4a4a4a"><span class="j">女</span></div>
<div class="t" style="left:27.50px;top:351.26px;transform:scaleX(1.014);font-size:9.6px;--j:0.9em;--jt:-0.1em;-webkit-text-stroke:0.12px #4a4a4a;color:#4a4a4a">2011/1/1</div>
<div class="t" style="left:68.60px;top:351.26px;transform:scaleX(0.965);font-size:9.6px;--j:0.9em;--jt:-0.1em;-webkit-text-stroke:0.12px #4a4a4a;color:#4a4a4a"><span class="j">全国</span></div>
<div class="t" style="left:91.91px;top:351.26px;transform:scaleX(0.986);font-size:9.6px;--j:0.9em;--jt:-0.1em;-webkit-text-stroke:0.12px #4a4a4a;color:#4a4a4a"><span class="j">農業，林業</span></div>
<div class="t" style="left:142.70px;top:351.26px;transform:scaleX(0.891);font-size:9.6px;--j:0.9em;--jt:-0.1em;-webkit-text-stroke:0.12px #4a4a4a;color:#4a4a4a">00_<span class="j">総数</span></div>
<div class="t" style="left:255.20px;top:351.26px;transform:scaleX(0.930);font-size:9.6px;--j:0.9em;--jt:-0.1em;-webkit-text-stroke:0.12px #4a4a4a;color:#4a4a4a">00_<span class="j">就業者総数</span></div>
<div class="t" style="left:379.65px;top:351.26px;transform:scaleX(0.950);font-size:9.6px;--j:0.9em;--jt:-0.1em;-webkit-text-stroke:0.12px #4a4a4a;color:#4a4a4a">15<span class="j">歳以上</span></div>
<div class="t" style="left:423.60px;top:351.26px;transform:scaleX(0.911);font-size:9.6px;--j:0.9em;--jt:-0.1em;-webkit-text-stroke:0.12px #4a4a4a;color:#4a4a4a"><span class="j">総数</span></div>
<div class="t" style="left:27.50px;top:365.68px;transform:scaleX(1.014);font-size:9.6px;--j:0.9em;--jt:-0.1em;-webkit-text-stroke:0.12px #4a4a4a;color:#4a4a4a">2011/1/1</div>
<div class="t" style="left:68.60px;top:365.68px;transform:scaleX(0.965);font-size:9.6px;--j:0.9em;--jt:-0.1em;-webkit-text-stroke:0.12px #4a4a4a;color:#4a4a4a"><span class="j">全国</span></div>
<div class="t" style="left:91.91px;top:365.68px;transform:scaleX(0.986);font-size:9.6px;--j:0.9em;--jt:-0.1em;-webkit-text-stroke:0.12px #4a4a4a;color:#4a4a4a"><span class="j">農業，林業</span></div>
<div class="t" style="left:142.70px;top:365.68px;transform:scaleX(0.891);font-size:9.6px;--j:0.9em;--jt:-0.1em;-webkit-text-stroke:0.12px #4a4a4a;color:#4a4a4a">00_<span class="j">総数</span></div>
<div class="t" style="left:255.20px;top:365.68px;transform:scaleX(0.930);font-size:9.6px;--j:0.9em;--jt:-0.1em;-webkit-text-stroke:0.12px #4a4a4a;color:#4a4a4a">00_<span class="j">就業者総数</span></div>
<div class="t" style="left:379.68px;top:365.68px;transform:scaleX(0.924);font-size:9.6px;--j:0.9em;--jt:-0.1em;-webkit-text-stroke:0.12px #4a4a4a;color:#4a4a4a">15<span class="j">〜</span>64<span class="j">歳</span></div>
<div class="t" style="left:423.60px;top:365.68px;transform:scaleX(0.911);font-size:9.6px;--j:0.9em;--jt:-0.1em;-webkit-text-stroke:0.12px #4a4a4a;color:#4a4a4a"><span class="j">総数</span></div>
<div class="t" style="left:27.50px;top:380.10px;transform:scaleX(1.014);font-size:9.6px;--j:0.9em;--jt:-0.1em;-webkit-text-stroke:0.12px #4a4a4a;color:#4a4a4a">2011/1/1</div>
<div class="t" style="left:68.60px;top:380.10px;transform:scaleX(0.965);font-size:9.6px;--j:0.9em;--jt:-0.1em;-webkit-text-stroke:0.12px #4a4a4a;color:#4a4a4a"><span class="j">全国</span></div>
<div class="t" style="left:91.91px;top:380.10px;transform:scaleX(0.986);font-size:9.6px;--j:0.9em;--jt:-0.1em;-webkit-text-stroke:0.12px #4a4a4a;color:#4a4a4a"><span class="j">農業，林業</span></div>
<div class="t" style="left:142.70px;top:380.10px;transform:scaleX(0.891);font-size:9.6px;--j:0.9em;--jt:-0.1em;-webkit-text-stroke:0.12px #4a4a4a;color:#4a4a4a">00_<span class="j">総数</span></div>
<div class="t" style="left:255.20px;top:380.10px;transform:scaleX(0.930);font-size:9.6px;--j:0.9em;--jt:-0.1em;-webkit-text-stroke:0.12px #4a4a4a;color:#4a4a4a">00_<span class="j">就業者総数</span></div>
<div class="t" style="left:379.65px;top:380.10px;transform:scaleX(0.950);font-size:9.6px;--j:0.9em;--jt:-0.1em;-webkit-text-stroke:0.12px #4a4a4a;color:#4a4a4a">15<span class="j">歳以上</span></div>
<div class="t" style="left:422.47px;top:380.10px;transform:scaleX(1.129);font-size:9.6px;--j:0.9em;--jt:-0.1em;-webkit-text-stroke:0.12px #4a4a4a;color:#4a4a4a"><span class="j">男</span></div>
<div class="t" style="left:27.50px;top:394.52px;transform:scaleX(1.014);font-size:9.6px;--j:0.9em;--jt:-0.1em;-webkit-text-stroke:0.12px #4a4a4a;color:#4a4a4a">2011/1/1</div>
<div class="t" style="left:68.60px;top:394.52px;transform:scaleX(0.965);font-size:9.6px;--j:0.9em;--jt:-0.1em;-webkit-text-stroke:0.12px #4a4a4a;color:#4a4a4a"><span class="j">全国</span></div>
<div class="t" style="left:91.91px;top:394.52px;transform:scaleX(0.986);font-size:9.6px;--j:0.9em;--jt:-0.1em;-webkit-text-stroke:0.12px #4a4a4a;color:#4a4a4a"><span class="j">農業，林業</span></div>
<div class="t" style="left:142.70px;top:394.52px;transform:scaleX(0.891);font-size:9.6px;--j:0.9em;--jt:-0.1em;-webkit-text-stroke:0.12px #4a4a4a;color:#4a4a4a">00_<span class="j">総数</span></div>
<div class="t" style="left:255.20px;top:394.52px;transform:scaleX(0.930);font-size:9.6px;--j:0.9em;--jt:-0.1em;-webkit-text-stroke:0.12px #4a4a4a;color:#4a4a4a">00_<span class="j">就業者総数</span></div>
<div class="t" style="left:379.68px;top:394.52px;transform:scaleX(0.924);font-size:9.6px;--j:0.9em;--jt:-0.1em;-webkit-text-stroke:0.12px #4a4a4a;color:#4a4a4a">15<span class="j">〜</span>64<span class="j">歳</span></div>
<div class="t" style="left:422.47px;top:394.52px;transform:scaleX(1.129);font-size:9.6px;--j:0.9em;--jt:-0.1em;-webkit-text-stroke:0.12px #4a4a4a;color:#4a4a4a"><span class="j">男</span></div>
<div class="t" style="left:27.50px;top:408.94px;transform:scaleX(1.014);font-size:9.6px;--j:0.9em;--jt:-0.1em;-webkit-text-stroke:0.12px #4a4a4a;color:#4a4a4a">2011/1/1</div>
<div class="t" style="left:68.60px;top:408.94px;transform:scaleX(0.965);font-size:9.6px;--j:0.9em;--jt:-0.1em;-webkit-text-stroke:0.12px #4a4a4a;color:#4a4a4a"><span class="j">全国</span></div>
<div class="t" style="left:91.91px;top:408.94px;transform:scaleX(0.986);font-size:9.6px;--j:0.9em;--jt:-0.1em;-webkit-text-stroke:0.12px #4a4a4a;color:#4a4a4a"><span class="j">農業，林業</span></div>
<div class="t" style="left:142.70px;top:408.94px;transform:scaleX(0.891);font-size:9.6px;--j:0.9em;--jt:-0.1em;-webkit-text-stroke:0.12px #4a4a4a;color:#4a4a4a">00_<span class="j">総数</span></div>
<div class="t" style="left:255.20px;top:408.94px;transform:scaleX(0.930);font-size:9.6px;--j:0.9em;--jt:-0.1em;-webkit-text-stroke:0.12px #4a4a4a;color:#4a4a4a">00_<span class="j">就業者総数</span></div>
<div class="t" style="left:379.65px;top:408.94px;transform:scaleX(0.950);font-size:9.6px;--j:0.9em;--jt:-0.1em;-webkit-text-stroke:0.12px #4a4a4a;color:#4a4a4a">15<span class="j">歳以上</span></div>
<div class="t" style="left:423.60px;top:408.94px;transform:scaleX(0.767);font-size:9.6px;--j:0.9em;--jt:-0.1em;-webkit-text-stroke:0.12px #4a4a4a;color:#4a4a4a"><span class="j">女</span></div>
<div class="t" style="left:27.50px;top:423.36px;transform:scaleX(1.014);font-size:9.6px;--j:0.9em;--jt:-0.1em;-webkit-text-stroke:0.12px #4a4a4a;color:#4a4a4a">2011/1/1</div>
<div class="t" style="left:68.60px;top:423.36px;transform:scaleX(0.965);font-size:9.6px;--j:0.9em;--jt:-0.1em;-webkit-text-stroke:0.12px #4a4a4a;color:#4a4a4a"><span class="j">全国</span></div>
<div class="t" style="left:91.91px;top:423.36px;transform:scaleX(0.986);font-size:9.6px;--j:0.9em;--jt:-0.1em;-webkit-text-stroke:0.12px #4a4a4a;color:#4a4a4a"><span class="j">農業，林業</span></div>
<div class="t" style="left:142.70px;top:423.36px;transform:scaleX(0.891);font-size:9.6px;--j:0.9em;--jt:-0.1em;-webkit-text-stroke:0.12px #4a4a4a;color:#4a4a4a">00_<span class="j">総数</span></div>
<div class="t" style="left:255.20px;top:423.36px;transform:scaleX(0.930);font-size:9.6px;--j:0.9em;--jt:-0.1em;-webkit-text-stroke:0.12px #4a4a4a;color:#4a4a4a">00_<span class="j">就業者総数</span></div>
<div class="t" style="left:379.68px;top:423.36px;transform:scaleX(0.924);font-size:9.6px;--j:0.9em;--jt:-0.1em;-webkit-text-stroke:0.12px #4a4a4a;color:#4a4a4a">15<span class="j">〜</span>64<span class="j">歳</span></div>
<div class="t" style="left:423.60px;top:423.36px;transform:scaleX(0.767);font-size:9.6px;--j:0.9em;--jt:-0.1em;-webkit-text-stroke:0.12px #4a4a4a;color:#4a4a4a"><span class="j">女</span></div>
<div class="t" style="left:27.50px;top:437.78px;transform:scaleX(1.014);font-size:9.6px;--j:0.9em;--jt:-0.1em;-webkit-text-stroke:0.12px #4a4a4a;color:#4a4a4a">2011/1/1</div>
<div class="t" style="left:68.60px;top:437.78px;transform:scaleX(0.965);font-size:9.6px;--j:0.9em;--jt:-0.1em;-webkit-text-stroke:0.12px #4a4a4a;color:#4a4a4a"><span class="j">全国</span></div>
<div class="t" style="left:91.91px;top:437.78px;transform:scaleX(0.994);font-size:9.6px;--j:0.9em;--jt:-0.1em;-webkit-text-stroke:0.12px #4a4a4a;color:#4a4a4a"><span class="j">非農林業</span></div>
<div class="t" style="left:142.70px;top:437.78px;transform:scaleX(0.891);font-size:9.6px;--j:0.9em;--jt:-0.1em;-webkit-text-stroke:0.12px #4a4a4a;color:#4a4a4a">00_<span class="j">総数</span></div>
<div class="t" style="left:255.20px;top:437.78px;transform:scaleX(0.938);font-size:9.6px;--j:0.9em;--jt:-0.1em;-webkit-text-stroke:0.12px #4a4a4a;color:#4a4a4a">01_<span class="j">休業者</span></div>
<div class="t" style="left:379.65px;top:437.78px;transform:scaleX(0.950);font-size:9.6px;--j:0.9em;--jt:-0.1em;-webkit-text-stroke:0.12px #4a4a4a;color:#4a4a4a">15<span class="j">歳以上</span></div>
<div class="t" style="left:423.60px;top:437.78px;transform:scaleX(0.767);font-size:9.6px;--j:0.9em;--jt:-0.1em;-webkit-text-stroke:0.12px #4a4a4a;color:#4a4a4a"><span class="j">女</span></div>
<div class="t" style="left:27.50px;top:452.20px;transform:scaleX(1.014);font-size:9.6px;--j:0.9em;--jt:-0.1em;-webkit-text-stroke:0.12px #4a4a4a;color:#4a4a4a">2011/1/1</div>
<div class="t" style="left:68.60px;top:452.20px;transform:scaleX(0.965);font-size:9.6px;--j:0.9em;--jt:-0.1em;-webkit-text-stroke:0.12px #4a4a4a;color:#4a4a4a"><span class="j">全国</span></div>
<div class="t" style="left:91.91px;top:452.20px;transform:scaleX(0.994);font-size:9.6px;--j:0.9em;--jt:-0.1em;-webkit-text-stroke:0.12px #4a4a4a;color:#4a4a4a"><span class="j">非農林業</span></div>
<div class="t" style="left:142.70px;top:452.20px;transform:scaleX(0.891);font-size:9.6px;--j:0.9em;--jt:-0.1em;-webkit-text-stroke:0.12px #4a4a4a;color:#4a4a4a">00_<span class="j">総数</span></div>
<div class="t" style="left:255.20px;top:452.20px;transform:scaleX(0.938);font-size:9.6px;--j:0.9em;--jt:-0.1em;-webkit-text-stroke:0.12px #4a4a4a;color:#4a4a4a">01_<span class="j">休業者</span></div>
<div class="t" style="left:379.68px;top:452.20px;transform:scaleX(0.924);font-size:9.6px;--j:0.9em;--jt:-0.1em;-webkit-text-stroke:0.12px #4a4a4a;color:#4a4a4a">15<span class="j">〜</span>64<span class="j">歳</span></div>
<div class="t" style="left:423.60px;top:452.20px;transform:scaleX(0.767);font-size:9.6px;--j:0.9em;--jt:-0.1em;-webkit-text-stroke:0.12px #4a4a4a;color:#4a4a4a"><span class="j">女</span></div>
<div class="a" style="left:0;top:47.2px;width:924px;height:13.8px;background:#f3f2f4;border-bottom:1px solid #d0d0d0"></div>
<div class="ch" style="left:17.00px;width:50.00px;background:#d5d4d8;"></div>
<div class="a g" style="left:17.0px;width:49.5px;top:46.8px;font-size:7.8px;line-height:11px;text-align:center;color:#3e3e3e;-webkit-text-stroke:0.1px #3e3e3e">A</div>
<div class="ch" style="left:67.00px;width:23.90px;"></div>
<div class="a g" style="left:66.5px;width:23.9px;top:46.8px;font-size:7.8px;line-height:11px;text-align:center;color:#3e3e3e;-webkit-text-stroke:0.1px #3e3e3e">B</div>
<div class="ch" style="left:90.90px;width:49.90px;"></div>
<div class="a g" style="left:90.4px;width:49.9px;top:46.8px;font-size:7.8px;line-height:11px;text-align:center;color:#3e3e3e;-webkit-text-stroke:0.1px #3e3e3e">C</div>
<div class="ch" style="left:140.80px;width:113.10px;"></div>
<div class="a g" style="left:140.3px;width:113.1px;top:46.8px;font-size:7.8px;line-height:11px;text-align:center;color:#3e3e3e;-webkit-text-stroke:0.1px #3e3e3e">D</div>
<div class="ch" style="left:253.90px;width:124.80px;"></div>
<div class="a g" style="left:253.4px;width:124.8px;top:46.8px;font-size:7.8px;line-height:11px;text-align:center;color:#3e3e3e;-webkit-text-stroke:0.1px #3e3e3e">E</div>
<div class="ch" style="left:378.70px;width:43.40px;"></div>
<div class="a g" style="left:378.2px;width:43.4px;top:46.8px;font-size:7.8px;line-height:11px;text-align:center;color:#3e3e3e;-webkit-text-stroke:0.1px #3e3e3e">F</div>
<div class="ch" style="left:422.10px;width:23.90px;"></div>
<div class="a g" style="left:421.6px;width:23.9px;top:46.8px;font-size:7.8px;line-height:11px;text-align:center;color:#3e3e3e;-webkit-text-stroke:0.1px #3e3e3e">G</div>
<div class="ch" style="left:446.00px;width:50.00px;"></div>
<div class="a g" style="left:445.5px;width:50.0px;top:46.8px;font-size:7.8px;line-height:11px;text-align:center;color:#3e3e3e;-webkit-text-stroke:0.1px #3e3e3e">H</div>
<div class="ch" style="left:496.00px;width:42.80px;"></div>
<div class="a g" style="left:495.5px;width:42.8px;top:46.8px;font-size:7.8px;line-height:11px;text-align:center;color:#3e3e3e;-webkit-text-stroke:0.1px #3e3e3e">I</div>
<div class="ch" style="left:538.80px;width:42.37px;"></div>
<div class="a g" style="left:538.3px;width:42.4px;top:46.8px;font-size:7.8px;line-height:11px;text-align:center;color:#3e3e3e;-webkit-text-stroke:0.1px #3e3e3e">J</div>
<div class="ch" style="left:581.17px;width:42.38px;"></div>
<div class="a g" style="left:580.7px;width:42.4px;top:46.8px;font-size:7.8px;line-height:11px;text-align:center;color:#3e3e3e;-webkit-text-stroke:0.1px #3e3e3e">K</div>
<div class="ch" style="left:623.55px;width:42.37px;"></div>
<div class="a g" style="left:623.0px;width:42.4px;top:46.8px;font-size:7.8px;line-height:11px;text-align:center;color:#3e3e3e;-webkit-text-stroke:0.1px #3e3e3e">L</div>
<div class="ch" style="left:665.92px;width:42.38px;"></div>
<div class="a g" style="left:665.4px;width:42.4px;top:46.8px;font-size:7.8px;line-height:11px;text-align:center;color:#3e3e3e;-webkit-text-stroke:0.1px #3e3e3e">M</div>
<div class="ch" style="left:708.30px;width:42.37px;"></div>
<div class="a g" style="left:707.8px;width:42.4px;top:46.8px;font-size:7.8px;line-height:11px;text-align:center;color:#3e3e3e;-webkit-text-stroke:0.1px #3e3e3e">N</div>
<div class="ch" style="left:750.67px;width:42.38px;"></div>
<div class="a g" style="left:750.2px;width:42.4px;top:46.8px;font-size:7.8px;line-height:11px;text-align:center;color:#3e3e3e;-webkit-text-stroke:0.1px #3e3e3e">O</div>
<div class="ch" style="left:793.05px;width:42.37px;"></div>
<div class="a g" style="left:792.5px;width:42.4px;top:46.8px;font-size:7.8px;line-height:11px;text-align:center;color:#3e3e3e;-webkit-text-stroke:0.1px #3e3e3e">P</div>
<div class="ch" style="left:835.42px;width:42.38px;"></div>
<div class="a g" style="left:834.9px;width:42.4px;top:46.8px;font-size:7.8px;line-height:11px;text-align:center;color:#3e3e3e;-webkit-text-stroke:0.1px #3e3e3e">Q</div>
<div class="ch" style="left:877.80px;width:42.37px;"></div>
<div class="a g" style="left:877.3px;width:42.4px;top:46.8px;font-size:7.8px;line-height:11px;text-align:center;color:#3e3e3e;-webkit-text-stroke:0.1px #3e3e3e">R</div>
<div class="a" style="left:0;top:47.2px;width:17px;height:13.8px;background:#f3f3f3;border-right:1px solid #d6d6d6;border-bottom:1px solid #d0d0d0"></div>
<svg class="a" style="left:0;top:47px" width="17" height="13"><polygon points="6.5,12 15.8,12 15.8,2.5" fill="#b9b9b9"/></svg>
<div class="rh" style="top:61px;height:29px;background:#d9d9d9"></div>
<div class="a g" style="left:0;width:17px;top:78px;font-size:8px;line-height:11px;text-align:center;color:#606060">1</div>
<div class="rh" style="top:90.00px;height:14.92px"></div>
<div class="a g" style="left:0;width:17px;top:91.00px;font-size:8.2px;line-height:14.42px;text-align:center;color:#4a4a4a">2</div>
<div class="rh" style="top:104.92px;height:14.42px"></div>
<div class="a g" style="left:0;width:17px;top:105.42px;font-size:8.2px;line-height:14.42px;text-align:center;color:#4a4a4a">3</div>
<div class="rh" style="top:119.34px;height:14.42px"></div>
<div class="a g" style="left:0;width:17px;top:119.84px;font-size:8.2px;line-height:14.42px;text-align:center;color:#4a4a4a">4</div>
<div class="rh" style="top:133.76px;height:14.42px"></div>
<div class="a g" style="left:0;width:17px;top:134.26px;font-size:8.2px;line-height:14.42px;text-align:center;color:#4a4a4a">5</div>
<div class="rh" style="top:148.18px;height:14.42px"></div>
<div class="a g" style="left:0;width:17px;top:148.68px;font-size:8.2px;line-height:14.42px;text-align:center;color:#4a4a4a">6</div>
<div class="rh" style="top:162.60px;height:14.42px"></div>
<div class="a g" style="left:0;width:17px;top:163.10px;font-size:8.2px;line-height:14.42px;text-align:center;color:#4a4a4a">7</div>
<div class="rh" style="top:177.02px;height:14.42px"></div>
<div class="a g" style="left:0;width:17px;top:177.52px;font-size:8.2px;line-height:14.42px;text-align:center;color:#4a4a4a">8</div>
<div class="rh" style="top:191.44px;height:14.42px"></div>
<div class="a g" style="left:0;width:17px;top:191.94px;font-size:8.2px;line-height:14.42px;text-align:center;color:#4a4a4a">9</div>
<div class="rh" style="top:205.86px;height:14.42px"></div>
<div class="a g" style="left:0;width:17px;top:206.36px;font-size:8.2px;line-height:14.42px;text-align:center;color:#4a4a4a">10</div>
<div class="rh" style="top:220.28px;height:14.42px"></div>
<div class="a g" style="left:0;width:17px;top:220.78px;font-size:8.2px;line-height:14.42px;text-align:center;color:#4a4a4a">11</div>
<div class="rh" style="top:234.70px;height:14.42px"></div>
<div class="a g" style="left:0;width:17px;top:235.20px;font-size:8.2px;line-height:14.42px;text-align:center;color:#4a4a4a">12</div>
<div class="rh" style="top:249.12px;height:14.42px"></div>
<div class="a g" style="left:0;width:17px;top:249.62px;font-size:8.2px;line-height:14.42px;text-align:center;color:#4a4a4a">13</div>
<div class="rh" style="top:263.54px;height:14.42px"></div>
<div class="a g" style="left:0;width:17px;top:264.04px;font-size:8.2px;line-height:14.42px;text-align:center;color:#4a4a4a">14</div>
<div class="rh" style="top:277.96px;height:14.42px"></div>
<div class="a g" style="left:0;width:17px;top:278.46px;font-size:8.2px;line-height:14.42px;text-align:center;color:#4a4a4a">15</div>
<div class="rh" style="top:292.38px;height:14.42px"></div>
<div class="a g" style="left:0;width:17px;top:292.88px;font-size:8.2px;line-height:14.42px;text-align:center;color:#4a4a4a">16</div>
<div class="rh" style="top:306.80px;height:14.42px"></div>
<div class="a g" style="left:0;width:17px;top:307.30px;font-size:8.2px;line-height:14.42px;text-align:center;color:#4a4a4a">17</div>
<div class="rh" style="top:321.22px;height:14.42px"></div>
<div class="a g" style="left:0;width:17px;top:321.72px;font-size:8.2px;line-height:14.42px;text-align:center;color:#4a4a4a">18</div>
<div class="rh" style="top:335.64px;height:14.42px"></div>
<div class="a g" style="left:0;width:17px;top:336.14px;font-size:8.2px;line-height:14.42px;text-align:center;color:#4a4a4a">19</div>
<div class="rh" style="top:350.06px;height:14.42px"></div>
<div class="a g" style="left:0;width:17px;top:350.56px;font-size:8.2px;line-height:14.42px;text-align:center;color:#4a4a4a">20</div>
<div class="rh" style="top:364.48px;height:14.42px"></div>
<div class="a g" style="left:0;width:17px;top:364.98px;font-size:8.2px;line-height:14.42px;text-align:center;color:#4a4a4a">21</div>
<div class="rh" style="top:378.90px;height:14.42px"></div>
<div class="a g" style="left:0;width:17px;top:379.40px;font-size:8.2px;line-height:14.42px;text-align:center;color:#4a4a4a">22</div>
<div class="rh" style="top:393.32px;height:14.42px"></div>
<div class="a g" style="left:0;width:17px;top:393.82px;font-size:8.2px;line-height:14.42px;text-align:center;color:#4a4a4a">23</div>
<div class="rh" style="top:407.74px;height:14.42px"></div>
<div class="a g" style="left:0;width:17px;top:408.24px;font-size:8.2px;line-height:14.42px;text-align:center;color:#4a4a4a">24</div>
<div class="rh" style="top:422.16px;height:14.42px"></div>
<div class="a g" style="left:0;width:17px;top:422.66px;font-size:8.2px;line-height:14.42px;text-align:center;color:#4a4a4a">25</div>
<div class="rh" style="top:436.58px;height:14.42px"></div>
<div class="a g" style="left:0;width:17px;top:437.08px;font-size:8.2px;line-height:14.42px;text-align:center;color:#4a4a4a">26</div>
<div class="rh" style="top:451.00px;height:14.42px"></div>
<div class="a g" style="left:0;width:17px;top:451.50px;font-size:8.2px;line-height:14.42px;text-align:center;color:#4a4a4a">27</div>
<div class="a" style="left:16.8px;top:60.6px;width:50.8px;height:29.8px;border:1.2px solid #2d6a3e"></div>
<div class="a" style="left:18px;top:61.8px;width:48.4px;height:27.4px;border:1px solid #78c46a"></div>
<div class="a" style="left:65.9px;top:89px;width:2.4px;height:2.4px;background:#17361f"></div>
<div class="a" style="left:912px;top:47.2px;width:12px;height:411.4px;background:#f3f3f3;border-left:1px solid #e8e8e8"></div>
<svg class="a" style="left:912px;top:47px" width="12" height="412"><polygon points="3.4,6.6 8.4,6.6 5.9,3.4" fill="#5a5a5a"/><rect x="3.6" y="10.4" width="5.4" height="9.5" rx="2.7" fill="#6a6a6a"/><polygon points="3.4,405 8.6,405 6,408.8" fill="#5a5a5a"/></svg>
<div class="a" style="left:0;top:458.4px;width:924px;height:19.6px;background:#e5e8f0;border-bottom:1px solid #d2d4da"></div>
<div class="a" style="left:0;top:458.4px;width:924px;height:4px;background:#eaeaf0"></div>
<svg class="a" style="left:10px;top:462px" width="30" height="12" viewBox="0 0 30 12" fill="none" stroke="#a4a4a8" stroke-width="0.9"><path d="M8 2.5 L4.5 6 L8 9.5"/><path d="M23.5 2.5 L27 6 L23.5 9.5"/></svg>
<div class="a" style="left:67.4px;top:458.4px;width:30.3px;height:16.4px;border-radius:0 0 2px 2px;background:#fafbfc"></div>
<div class="a" style="left:98px;top:458.4px;width:38.2px;height:16.4px;background:#e8eaf1;border-right:1px solid #d9dbe2"></div>
<div class="t" style="left:73.00px;top:460.20px;transform:scaleX(0.958);font-size:9.6px;color:#3c3c3c">data</div>
<div class="a" style="left:72.1px;top:472.2px;width:19.9px;height:1.5px;border-radius:1px;background:#3f8f63"></div>
<div class="t" style="left:107.89px;top:460.70px;transform:scaleX(1.005);font-size:9.6px;color:#3c3c3c">pivot</div>
<svg class="a" style="left:161.5px;top:462.5px" width="9" height="9" viewBox="0 0 9 9" stroke="#3a3a3a" stroke-width="1"><path d="M4.5 0.5 V8.5 M0.5 4.5 H8.5"/></svg>
<svg class="a" style="left:553px;top:461px" width="6" height="13" viewBox="0 0 6 13" fill="#555"><circle cx="3" cy="3.2" r="0.8"/><circle cx="3" cy="6.2" r="0.8"/><circle cx="3" cy="9.2" r="0.8"/></svg>
<div class="a" style="left:565px;top:462.5px;width:347px;height:10px;border-radius:2px;background:#fbfbfc"></div>
<svg class="a" style="left:565px;top:462px" width="347" height="11" viewBox="0 0 347 11" fill="#606060"><polygon points="3.5,5.5 7,3 7,8"/><rect x="10" y="3" width="324" height="5" rx="2.5" fill="#6c6c6c"/><polygon points="343.5,5.5 340,3 340,8"/></svg>
</body></html>
